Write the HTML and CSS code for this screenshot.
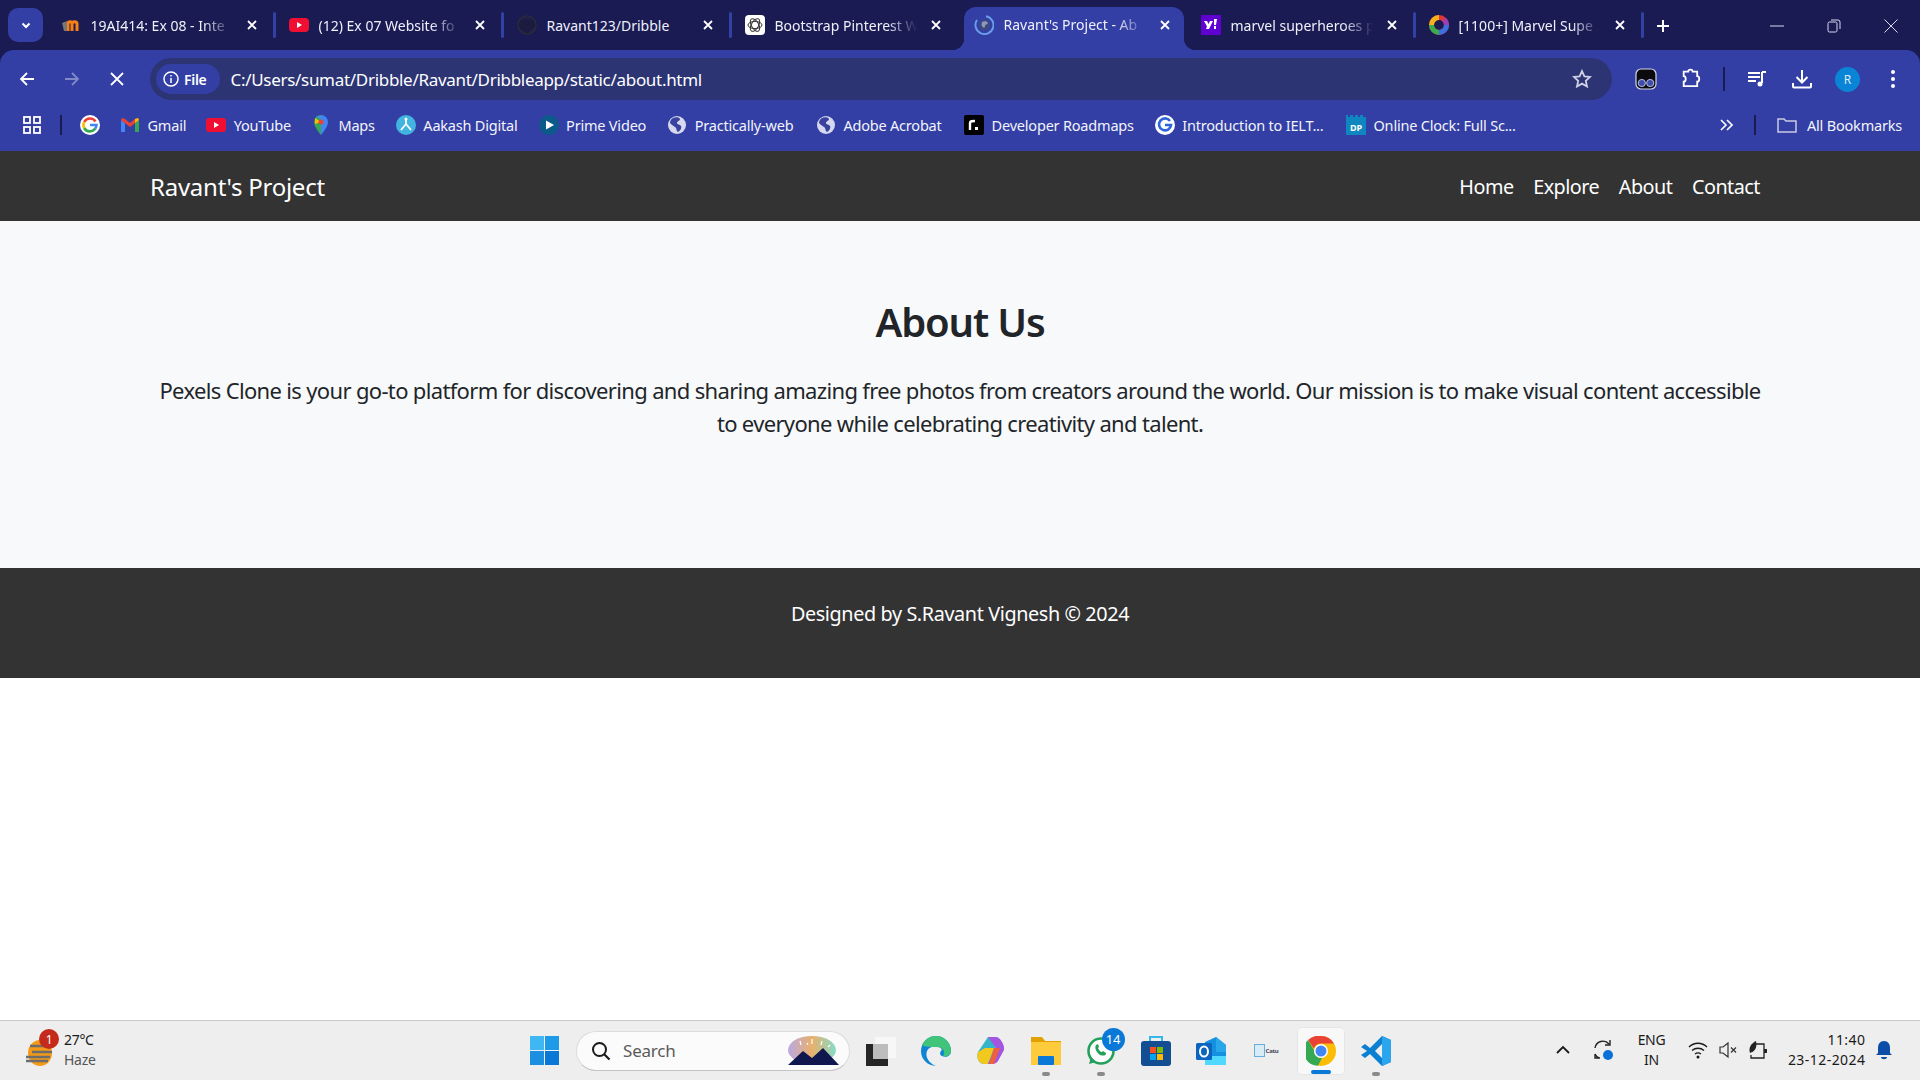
FILE: index.html
```html
<!DOCTYPE html>
<html lang="en">
<head>
<meta charset="utf-8">
<title>Ravant's Project - About</title>
<link rel="stylesheet" href="styles.css">
</head>
<body>
<svg class="defs" aria-hidden="true">
  <symbol id="x" viewBox="0 0 12 12"><path d="M2 2l8 8M10 2l-8 8" stroke="#fff" stroke-width="1.8" fill="none"/></symbol>
  <symbol id="globe" viewBox="0 0 20 20"><circle cx="10" cy="10" r="9" fill="#d5d8ee"/><path d="M6 3c3-1 6-1 7 1 0 2-3 2-3 4s3 1 4 3-1 5-3 6c-2-1-1-4-3-5S4 9 3 8c0-2 1-4 3-5z" fill="#39439f"/></symbol>
</svg>

<header class="browser">
  <div class="strip">
    <button class="tabsearch"><svg class="i12" viewBox="0 0 12 12"><path d="M2.5 4.5L6 8l3.5-3.5" stroke="#fff" stroke-width="2" fill="none"/></svg></button>
    <div class="tab">
      <svg class="fav" viewBox="0 0 20 20"><path d="M7 16V9c0-3 4-3 4 0v7M11 9c0-3 5-3 5 0v7" stroke="#f98012" stroke-width="3" fill="none"/><path d="M1 8l5-2v10H3z" fill="#777"/></svg>
      <span class="title fade">19AI414: Ex 08 - Inte</span><svg class="close"><use href="#x"/></svg><i class="sep"></i>
    </div>
    <div class="tab">
      <svg class="fav" viewBox="0 0 20 20"><rect y="3" width="20" height="14" rx="4" fill="#f00f33"/><path d="M8 7l5 3-5 3z" fill="#fff"/></svg>
      <span class="title fade">(12) Ex 07 Website fo</span><svg class="close"><use href="#x"/></svg><i class="sep"></i>
    </div>
    <div class="tab">
      <svg class="fav" viewBox="0 0 20 20"><circle cx="10" cy="10" r="9" fill="#20204f"/><path d="M7 18v-3c-3 0-5-2-5-5 0-2 1-3 1-3V4l3 1c2-.6 6-.6 8 0l3-1v3s1 1 1 3c0 3-2 5-5 5v3" fill="#1b1b40"/><circle cx="10" cy="10" r="9" fill="none" stroke="#2a2a38" stroke-width="1.5"/></svg>
      <span class="title">Ravant123/Dribble</span><svg class="close"><use href="#x"/></svg><i class="sep"></i>
    </div>
    <div class="tab">
      <svg class="fav" viewBox="0 0 20 20"><rect width="20" height="20" rx="4" fill="#fff"/><g fill="none" stroke="#333" stroke-width="1"><ellipse cx="10" cy="10" rx="7" ry="3.6"/><ellipse cx="10" cy="10" rx="7" ry="3.6" transform="rotate(60 10 10)"/><ellipse cx="10" cy="10" rx="7" ry="3.6" transform="rotate(120 10 10)"/></g></svg>
      <span class="title fade">Bootstrap Pinterest W</span><svg class="close"><use href="#x"/></svg>
    </div>
    <div class="tab active">
      <svg class="fav" viewBox="0 0 20 20"><circle cx="10.500" cy="10" r="5.500" fill="#3c4a80"/><path d="M8 7c2-1 5-1 6 1-1 2-3 1-3 3s-2 2-3 0 0-2 0-4z" fill="#8f98b8"/><path d="M12 1.200A9 9 0 1 1 3 5" fill="none" stroke="#6a9be8" stroke-width="2"/></svg>
      <span class="title fade">Ravant's Project - Ab</span><svg class="close"><use href="#x"/></svg>
    </div>
    <div class="tab">
      <svg class="fav" viewBox="0 0 20 20"><rect width="20" height="20" fill="#6001d2"/><path d="M3 6h3l1.500 3L9 6h3l-4 8H5l1-2.500zM13 4h3l-1 6h-2zM13 11h2v3h-2z" fill="#fff"/></svg>
      <span class="title fade">marvel superheroes p</span><svg class="close"><use href="#x"/></svg><i class="sep"></i>
    </div>
    <div class="tab">
      <svg class="fav" viewBox="0 0 20 20" fill="none" stroke-width="5"><circle cx="10" cy="10" r="7.500" stroke="#e0353a"/><path d="M10 2.500A7.500 7.500 0 0 0 2.500 10" stroke="#f6b21b"/><path d="M2.500 10A7.500 7.500 0 0 0 10 17.500" stroke="#3cab4a"/><path d="M10 17.500A7.500 7.500 0 0 0 17.500 10" stroke="#3d6fe0"/><path d="M17.500 10A7.500 7.500 0 0 0 15 4.500" stroke="#9c3fb5"/></svg>
      <span class="title fade">[1100+] Marvel Supe</span><svg class="close"><use href="#x"/></svg><i class="sep"></i>
    </div>
    <svg class="plus" viewBox="0 0 14 14"><path d="M7 1v12M1 7h12" stroke="#fff" stroke-width="2"/></svg>
    <div class="winctl">
      <svg class="i14" viewBox="0 0 14 14"><path d="M0 7h14" stroke="#d8daf0" stroke-width="1"/></svg>
      <svg class="i14" viewBox="0 0 14 14"><rect x="1" y="3" width="9" height="10" rx="1.500" fill="none" stroke="#d8daf0"/><path d="M4 1h7a2 2 0 0 1 2 2v7" fill="none" stroke="#d8daf0"/></svg>
      <svg class="i14" viewBox="0 0 14 14"><path d="M0.500 0.500l13 13M13.500 0.500l-13 13" stroke="#d8daf0"/></svg>
    </div>
  </div>

  <div class="toolbar">
    <div class="navbtns">
      <svg class="i18" viewBox="0 0 18 18"><path d="M16 9H3M9 3L3 9l6 6" stroke="#fff" stroke-width="1.800" fill="none"/></svg>
      <svg class="i18" viewBox="0 0 18 18"><path d="M2 9h13M9 3l6 6-6 6" stroke="#8188c6" stroke-width="1.800" fill="none"/></svg>
      <svg class="i18" viewBox="0 0 18 18"><path d="M3 3l12 12M15 3L3 15" stroke="#fff" stroke-width="1.800" fill="none"/></svg>
    </div>
    <div class="omni">
      <div class="chip">
        <svg class="i18" viewBox="0 0 18 18"><circle cx="9" cy="9" r="7" fill="none" stroke="#fff" stroke-width="1.500"/><path d="M9 8v5M9 5v1.600" stroke="#fff" stroke-width="1.500"/></svg>
        <span>File</span>
      </div>
      <span class="url">C:/Users/sumat/Dribble/Ravant/Dribbleapp/static/about.html</span>
      <svg class="star" viewBox="0 0 20 20"><path d="M10 2l2.400 5.300 5.600.600-4.200 3.900 1.200 5.700-5-2.900-5 2.900 1.200-5.700L2 7.900l5.600-.6z" fill="none" stroke="#cfd2e4" stroke-width="1.800"/></svg>
    </div>
    <div class="actions">
      <svg class="i22" viewBox="0 0 22 22"><rect x="1" y="1" width="20" height="20" rx="5" fill="#0b0b0f" stroke="#d6d8ea" stroke-width="1.200"/><circle cx="6.800" cy="15" r="3.600" fill="#3f4ea8" stroke="#b9bfe6"/><circle cx="15.200" cy="15" r="3.600" fill="#3f4ea8" stroke="#b9bfe6"/></svg>
      <svg class="i22 puzzle" viewBox="0 0 22 22"><path d="M3 3h5c0-3 5-3 5 0h5v5c3 0 3 6 0 6v5H3v-5c3 0 3-6 0-6z" transform="translate(1 1) scale(.9)" fill="none" stroke="#fff" stroke-width="2"/></svg>
      <i class="vsep"></i>
      <svg class="i22" viewBox="0 0 22 22"><path d="M2 5h12M2 9h12M2 13h8" stroke="#fff" stroke-width="2"/><path d="M16 4h4M16 4v11" stroke="#fff" stroke-width="2" fill="none"/><circle cx="14" cy="16" r="2.500" fill="#fff"/></svg>
      <svg class="i22 dl" viewBox="0 0 22 22"><path d="M11 2v12M5.500 9l5.500 5.500L16.500 9M2 15v3.500a1 1 0 0 0 1 1h16a1 1 0 0 0 1-1V15" stroke="#fff" stroke-width="2" fill="none"/></svg>
      <span class="avatar">R</span>
      <svg class="i22 dots" viewBox="0 0 22 22"><circle cx="11" cy="4" r="2" fill="#fff"/><circle cx="11" cy="11" r="2" fill="#fff"/><circle cx="11" cy="18" r="2" fill="#fff"/></svg>
    </div>
  </div>

  <nav class="bookmarks">
    <svg class="apps" viewBox="0 0 18 18"><g fill="none" stroke="#fff" stroke-width="1.800"><rect x="1" y="1" width="6" height="6"/><rect x="11" y="1" width="6" height="6"/><rect x="1" y="11" width="6" height="6"/><rect x="11" y="11" width="6" height="6"/></g></svg>
    <i class="bsep"></i>
    <svg class="bfav g0" viewBox="0 0 20 20"><circle cx="10" cy="10" r="10" fill="#fff"/><g fill="none" stroke-width="2.600"><path d="M15.500 6.500A6.500 6.500 0 0 0 4.200 7" stroke="#ea4335"/><path d="M4.200 7a6.500 6.500 0 0 0 0 6" stroke="#fbbc05"/><path d="M4.200 13a6.500 6.500 0 0 0 11 .6" stroke="#34a853"/><path d="M15.200 13.600A6.500 6.500 0 0 0 16.500 10H10" stroke="#4285f4"/></g></svg>
    <a class="bm"><svg class="bfav" viewBox="0 0 20 20"><path d="M1 5v12h4V8z" fill="#4285f4"/><path d="M19 5v12h-4V8z" fill="#34a853"/><path d="M1 5l9 7 9-7-1-2-3 1-5 4-5-4-3-1z" fill="#ea4335"/><path d="M15 4v4l4-3-1-2z" fill="#fbbc05"/></svg>Gmail</a>
    <a class="bm"><svg class="bfav" viewBox="0 0 20 20"><rect y="3" width="20" height="14" rx="3" fill="#f00f33"/><path d="M8 7l5 3-5 3z" fill="#fff"/></svg>YouTube</a>
    <a class="bm"><svg class="bfav" viewBox="0 0 20 20"><path d="M10 0a7 7 0 0 0-7 7c0 5 7 13 7 13z" fill="#34a853"/><path d="M10 0a7 7 0 0 1 7 7c0 5-7 13-7 13z" fill="#4285f4"/><path d="M4 3l6 4-6 2z" fill="#fbbc05"/><path d="M5 1l5 4 3-4z" fill="#4285f4"/><circle cx="10" cy="7" r="2.500" fill="#ea4335"/></svg>Maps</a>
    <a class="bm wide"><svg class="bfav" viewBox="0 0 20 20"><circle cx="10" cy="10" r="10" fill="#42b4e0"/><path d="M10 3v6M10 9l-5 6M10 9l5 6" stroke="#fff" stroke-width="1.800"/><circle cx="10" cy="4" r="1.500" fill="#fff"/></svg>Aakash Digital</a>
    <a class="bm wide"><svg class="bfav" viewBox="0 0 20 20"><circle cx="10" cy="10" r="10" fill="#0b5a8a"/><path d="M7 5.500l8 4.500-8 4.500z" fill="#fff"/></svg>Prime Video</a>
    <a class="bm wide"><svg class="bfav"><use href="#globe"/></svg>Practically-web</a>
    <a class="bm wider"><svg class="bfav"><use href="#globe"/></svg>Adobe Acrobat</a>
    <a class="bm wider"><svg class="bfav" viewBox="0 0 20 20"><rect width="20" height="20" rx="2" fill="#000"/><path d="M6 15V8c0-2 2-2 5-2" stroke="#fff" stroke-width="2.400" fill="none"/><rect x="11" y="12" width="3" height="3" fill="#fff"/></svg>Developer Roadmaps</a>
    <a class="bm wide"><svg class="bfav" viewBox="0 0 20 20"><circle cx="10" cy="10" r="10" fill="#fff"/><path d="M15 6a6 6 0 1 0 1 4h-6" fill="none" stroke="#2d66d8" stroke-width="2.600"/></svg>Introduction to IELT...</a>
    <a class="bm wider"><svg class="bfav" viewBox="0 0 20 20"><path d="M0 0h2v2h2V0h3v2h2V0h3v2h2V0h3v2h3v18H0z" fill="#0f86bf"/><text x="10" y="16" class="dp">DP</text></svg>Online Clock: Full Sc...</a>
    <span class="bspace"></span>
    <svg class="chev" viewBox="0 0 14 14"><path d="M2 2l5 5-5 5M8 2l5 5-5 5" fill="none" stroke="#fff" stroke-width="1.600"/></svg>
    <i class="bsep right"></i>
    <svg class="folder" viewBox="0 0 20 20"><path d="M1 4h6l2 2h10v11H1z" fill="none" stroke="#c9cce2" stroke-width="1.500"/></svg>
    <span class="allb">All Bookmarks</span>
  </nav>
</header>

<div class="site">
  <div class="sitenav">
    <a class="brand">Ravant's Project</a>
    <ul class="links"><li>Home</li><li>Explore</li><li>About</li><li>Contact</li></ul>
  </div>
  <main class="about">
    <h1>About Us</h1>
    <p>Pexels Clone is your go-to platform for discovering and sharing amazing free photos from creators around the world. Our mission is to make visual content accessible to everyone while celebrating creativity and talent.</p>
  </main>
  <footer class="foot">Designed by S.Ravant Vignesh © 2024</footer>
</div>

<div class="filler"></div>

<div class="taskbar">
  <div class="weather">
    <div class="wicon">
      <svg viewBox="0 0 28 26"><ellipse cx="15" cy="13" rx="12" ry="13" fill="#f59a16"/><path d="M5 6h22M7 12h20M1 17h24M1 21h22" stroke="#6d6d6d" stroke-width="2.400"/></svg>
      <span class="wbadge">1</span>
    </div>
    <div class="wtext"><span>27°C</span><span class="haze">Haze</span></div>
  </div>
  <div class="center">
    <svg class="start" viewBox="0 0 29 29"><rect width="14" height="14" fill="#3fb7f2"/><rect x="15" width="14" height="14" fill="#1e9be8"/><rect y="15" width="14" height="14" fill="#1c8fe0"/><rect x="15" y="15" width="14" height="14" fill="#0a78d6"/></svg>
    <div class="search">
      <svg class="i20" viewBox="0 0 20 20"><circle cx="8.500" cy="8.500" r="6.500" fill="none" stroke="#1a1a1a" stroke-width="2"/><path d="M13 13l5.500 5.500" stroke="#1a1a1a" stroke-width="2.200"/></svg>
      <span>Search</span>
      <svg class="scene" viewBox="0 0 53 30"><defs><linearGradient id="sky" x1="0" y1="0" x2="1" y2="0"><stop offset="0" stop-color="#b9a9e6"/><stop offset=".5" stop-color="#e9b06a"/><stop offset="1" stop-color="#86dcc8"/></linearGradient></defs><ellipse cx="26" cy="14" rx="24" ry="14" fill="url(#sky)"/><path d="M2 29L17 15l9 7 11-10 16 17z" fill="#10174f"/><path d="M14 5l1 4M26 3v5M36 5l-1 4M21 7l1 2M44 9l-2 2" stroke="#fff" stroke-width="1.200"/></svg>
    </div>
    <div class="apps-row">
      <span class="slot"><svg class="i30" viewBox="0 0 30 30"><rect x="9" y="1" width="21" height="21" fill="#f7f7f7"/><rect y="8" width="22" height="22" fill="#262626"/><rect x="7" y="8" width="15" height="15" fill="#bdbdbd"/></svg></span>
      <span class="slot"><svg class="i30" viewBox="0 0 30 30"><path d="M15 0a15 15 0 0 1 15 15c0 5-5 7-9 5-3-1-2-5 0-6-2-5-12-5-15 1-2 5 1 12 9 15A15 15 0 0 1 15 0z" fill="#0d84d4"/><path d="M1 9C4 3 9 0 15 0a15 15 0 0 1 15 15c0 4-4 6-8 5 3-4 0-9-7-9-6 0-11 0-14-2z" fill="#3fc47a"/></svg></span>
      <span class="slot"><svg class="i30" viewBox="0 0 30 30"><path d="M12 1h5l3 10-6 17H8C3 28 0 22 2 16z" fill="#35b5c8"/><path d="M9 12h9l-6 16H8C3 28 0 22 2 16z" fill="#f0c81e"/><path d="M12 1h8c4 0 9 8 8 13l-6 11c-2 3-5 3-8 3h-2l8-16z" fill="#a155e0"/><path d="M18 12h6l-6 16h-5z" fill="#f0603e"/></svg></span>
      <span class="slot dot"><svg class="i30" viewBox="0 0 30 30"><path d="M0 1h11l3 4h16v24H0z" fill="#e1a200"/><rect y="6" width="30" height="23" fill="#fecb3c"/><rect x="7" y="20" width="16" height="9" rx="1" fill="#0a78d6"/></svg></span>
      <span class="slot dot"><svg class="i30" viewBox="0 0 30 30"><circle cx="15" cy="15" r="12.500" fill="#fff" stroke="#23a05a" stroke-width="2.600"/><path d="M3 28l2-7 5 5z" fill="#23a05a"/><path d="M10 9c-2 3 1 8 4 10 3 1 6 1 6-2l-3-2-1 1c-2 0-3-2-4-4l1-1-1-3z" fill="#23a05a"/></svg><b class="count">14</b></span>
      <span class="slot"><svg class="i30" viewBox="0 0 30 30"><path d="M9 5V1h12v4" fill="none" stroke="#35b8ea" stroke-width="2"/><rect y="5" width="30" height="25" rx="3" fill="#124e91"/><rect x="9" y="11" width="6" height="6" fill="#f25022"/><rect x="16" y="11" width="6" height="6" fill="#7fba00"/><rect x="9" y="18" width="6" height="6" fill="#00a4ef"/><rect x="16" y="18" width="6" height="6" fill="#ffb900"/></svg></span>
      <span class="slot"><svg class="i30" viewBox="0 0 30 30"><path d="M9 6l11-5 10 8v15l-8 5H11z" fill="#1490df"/><path d="M20 1l10 8v7H20z" fill="#28a8ea"/><rect x="9" y="20" width="21" height="9" fill="#50d9ff"/><rect y="7" width="16" height="17" rx="1.500" fill="#0a64c0"/><ellipse cx="8" cy="15.500" rx="4" ry="5" fill="none" stroke="#fff" stroke-width="2"/></svg></span>
      <span class="slot"><span class="catu"><svg viewBox="0 0 12 14"><rect x=".5" y=".5" width="11" height="13" fill="#d8ecf8" stroke="#5aa9df"/></svg><em>Catu</em></span></span>
      <span class="slot live"><svg class="i30" viewBox="0 0 30 30"><circle cx="15" cy="15" r="15" fill="#fbbc05"/><path d="M15 0a15 15 0 0 1 13 7.500H15a7.500 7.500 0 0 0-7 5L2 4A15 15 0 0 1 15 0z" fill="#ea4335"/><path d="M2 4l6.500 11A7 7 0 0 0 16 22l-4 7.700A15 15 0 0 1 2 4z" fill="#34a853"/><circle cx="15" cy="15" r="7" fill="#fff"/><circle cx="15" cy="15" r="5.500" fill="#4285f4"/></svg></span>
      <span class="slot dot"><svg class="i30" viewBox="0 0 30 30"><path d="M21 0l9 4v22l-9 4-12-12-5 4-4-3 6-4-6-4 4-3 5 4z" fill="#0b7fd1"/><path d="M21 0l9 4v22l-9 4z" fill="#2aa5ee"/><path d="M21 8l-7 7 7 7z" fill="#eeeeee"/></svg></span>
    </div>
  </div>
  <div class="tray">
    <svg class="i14 chevup" viewBox="0 0 14 14"><path d="M1 10l6-6 6 6" fill="none" stroke="#1a1a1a" stroke-width="1.800"/></svg>
    <span class="sync"><svg class="i22" viewBox="0 0 22 22"><path d="M2 9a8 8 0 0 1 14-4M4 17" fill="none" stroke="#222" stroke-width="1.400"/><path d="M17 1v5h-5M2 15v4h5M2 15c1 2 2 3 4 4" fill="none" stroke="#222" stroke-width="1.400"/><circle cx="15" cy="16" r="5" fill="#0a6fd6"/></svg></span>
    <div class="lang"><span>ENG</span><span>IN</span></div>
    <svg class="i20 wifi" viewBox="0 0 20 20"><g fill="none" stroke="#1a1a1a" stroke-width="1.400"><path d="M1 7c5-5 13-5 18 0M4 10.500c3.500-3 8.500-3 12 0M7 14c2-1.500 4-1.500 6 0"/></g><circle cx="10" cy="17" r="1.500" fill="#1a1a1a"/></svg>
    <svg class="i20 vol" viewBox="0 0 20 20"><path d="M1 7h3l5-4v14l-5-4H1z" fill="none" stroke="#333" stroke-width="1.200"/><path d="M12 7.500l5 5M17 7.500l-5 5" stroke="#333" stroke-width="1.200"/></svg>
    <svg class="i20 batt" viewBox="0 0 20 20"><path d="M8 4h8v14H3v-3" fill="none" stroke="#222" stroke-width="1.300"/><path d="M16 9h3v4h-3" fill="#222"/><path d="M2 13C0 7 4 3 8 1c1 5 0 9-4 11z" fill="#222"/></svg>
    <div class="clock"><span>11:40</span><span>23-12-2024</span></div>
    <svg class="i20 bell" viewBox="0 0 20 20"><path d="M10 1c4 0 6 3 6 7v5l2 2H2l2-2V8c0-4 2-7 6-7z" fill="#0c4da8"/><path d="M7 17h6c0 3-6 3-6 0z" fill="#0c4da8"/></svg>
  </div>
</div>
</body>
</html>
```

FILE: styles.css
```css
* { box-sizing: border-box; }
html, body { margin: 0; padding: 0; }
body {
  width: 1920px;
  height: 1080px;
  overflow: hidden;
  display: flex;
  flex-direction: column;
  background: #fff;
  font-family: "Noto Sans", "Open Sans", sans-serif;
  color: #212529;
}
.defs { position: absolute; width: 0; height: 0; }
svg { display: block; flex: none; }
.i12 { width: 12px; height: 12px; }
.i14 { width: 14px; height: 14px; }
.i18 { width: 18px; height: 18px; }
.i20 { width: 20px; height: 20px; }
.i22 { width: 22px; height: 22px; }
.i30 { width: 30px; height: 30px; }

/* browser frame */
.browser { flex: none; background: #1b1b54; }
.strip {
  height: 50px;
  padding: 8px 0 0 8px;
  display: flex;
  align-items: flex-start;
}
.tabsearch {
  width: 35px;
  height: 34px;
  margin-right: 4.5px;
  padding: 0;
  border: 0;
  border-radius: 10px;
  background: #333fa5;
  display: flex;
  align-items: center;
  justify-content: center;
}
.tab {
  width: 228px;
  height: 42px;
  padding: 0 0 8px 13px;
  display: flex;
  align-items: center;
  color: #eef0fa;
  font-size: 14px;
  letter-spacing: 0;
  position: relative;
}
.tab.active {
  width: 220px;
  margin: -1px 4px 0;
  height: 43px;
  padding-left: 10px;
  background: #333fa5;
  border-radius: 12px 12px 0 0;
}
.tab.active::before,
.tab.active::after {
  content: "";
  position: absolute;
  bottom: 0;
  width: 12px;
  height: 12px;
}
.tab.active::before { left: -12px; background: radial-gradient(circle at 0 0, transparent 12px, #333fa5 12.5px); }
.tab.active::after { right: -12px; background: radial-gradient(circle at 100% 0, transparent 12px, #333fa5 12.5px); }
.fav { width: 20px; height: 20px; margin-right: 10px; }
.title { width: 148px; white-space: nowrap; overflow: hidden; }
.title.fade { -webkit-mask-image: linear-gradient(to right, #000 calc(100% - 36px), transparent calc(100% - 6px)); mask-image: linear-gradient(to right, #000 calc(100% - 36px), transparent calc(100% - 6px)); }
.close { width: 12px; height: 12px; margin-left: 7px; }
.sep { width: 3px; height: 26px; margin-left: auto; background: #3340a5; border-radius: 2px; }
.plus { width: 14px; height: 14px; margin: 11px 0 0 12.5px; }
.winctl {
  margin-left: auto;
  padding: 11px 22px 0 0;
  display: flex;
  gap: 43px;
}

.toolbar {
  height: 50px;
  background: #333fa5;
  border-radius: 14px 14px 0 0;
  padding: 8px 0 0;
  display: flex;
  align-items: flex-start;
}
.navbtns {
  width: 150px;
  height: 42px;
  padding-left: 18px;
  display: flex;
  align-items: center;
  gap: 27px;
}
.omni {
  width: 1462px;
  height: 42px;
  padding: 0 20px 0 6px;
  background: #2d3474;
  border-radius: 21px;
  display: flex;
  align-items: center;
}
.chip {
  width: 64px;
  height: 30px;
  padding-left: 6px;
  background: #333fa5;
  border-radius: 15px;
  display: flex;
  align-items: center;
  gap: 4px;
  color: #fff;
  font-size: 14px;
  font-weight: 600;
  letter-spacing: -0.3px;
}
.url {
  margin-left: 10.5px;
  font-size: 17px;
  letter-spacing: -0.3px;
  color: #fff;
  white-space: nowrap;
}
.star { width: 20px; height: 20px; margin-left: auto; }
.actions {
  flex: 1;
  height: 42px;
  padding-left: 23px;
  display: flex;
  align-items: center;
}
.puzzle { margin-left: 23px; }
.vsep { width: 2px; height: 24px; margin: 0 21px; background: #1b1b54; }
.dl { margin-left: 23px; }
.avatar {
  width: 25px;
  height: 25px;
  margin-left: 22px;
  border-radius: 50%;
  background: #0a84d6;
  color: #dfeaf5;
  font-size: 12px;
  display: flex;
  align-items: center;
  justify-content: center;
}
.dots { margin-left: 22px; }

.bookmarks {
  height: 51px;
  padding: 0 0 1px 23px;
  background: #333fa5;
  display: flex;
  align-items: center;
  color: #f2f3fb;
  font-size: 14.500px;
  letter-spacing: -0.2px;
}
.apps { width: 18px; height: 18px; }
.bsep { width: 2px; height: 20px; margin-left: 19px; background: #1b1b54; }
.bsep.right { margin-left: 21px; }
.bfav { width: 20px; height: 20px; margin-right: 7.500px; }
.g0 { margin: 0 0 0 18px; }
.bm { display: flex; align-items: center; white-space: nowrap; margin-left: 20px; }
.bm.wide { margin-left: 21px; }
.bm.wider { margin-left: 22.500px; }
.dp { font: 700 9px "Noto Sans", sans-serif; fill: #fff; text-anchor: middle; }
.bspace { flex: 1; }
.chev { width: 14px; height: 14px; }
.folder { width: 20px; height: 20px; margin: 0 10px 0 21px; }
.allb { padding-right: 18px; white-space: nowrap; }

/* the site */
.site { flex: none; }
.sitenav {
  height: 70px;
  padding: 0 160px 0 150px;
  background: #333;
  display: flex;
  align-items: center;
  justify-content: space-between;
  color: #fff;
}
.brand { font-size: 24px; letter-spacing: -0.25px; }
.links {
  list-style: none;
  margin: 0;
  padding: 0;
  display: flex;
  gap: 19.500px;
  font-size: 19.800px;
  letter-spacing: -0.5px;
}
.about {
  height: 347px;
  padding: 75px 150px 0;
  background: #f8f9fa;
  text-align: center;
}
.about h1 {
  margin: 0 0 26px;
  font-size: 40px;
  line-height: 52px;
  font-weight: 600;
  letter-spacing: -1.15px;
}
.about p {
  margin: 0;
  font-size: 22px;
  line-height: 33px;
  letter-spacing: -0.66px;
}
.foot {
  height: 110px;
  padding-bottom: 20px;
  background: #333;
  color: #fff;
  font-size: 19.800px;
  letter-spacing: -0.38px;
  display: flex;
  align-items: center;
  justify-content: center;
}
.filler { flex: 1; }

/* taskbar */
.taskbar {
  height: 60px;
  flex: none;
  background: #eee;
  border-top: 1px solid #c8c8c8;
  display: flex;
  align-items: center;
  color: #1a1a1a;
  font-size: 14px;
  letter-spacing: -0.3px;
  position: relative;
}
.weather { width: 530px; padding-left: 25px; display: flex; align-items: center; gap: 11px; margin-top: -1px; }
.wicon { width: 28px; height: 26px; margin-top: 6px; position: relative; }
.wicon svg { width: 28px; height: 26px; }
.wbadge {
  position: absolute;
  top: -11px;
  left: 14px;
  width: 20px;
  height: 20px;
  border-radius: 50%;
  background: #c42b1c;
  color: #fff;
  font-size: 12px;
  display: flex;
  align-items: center;
  justify-content: center;
}
.wtext { display: flex; flex-direction: column; line-height: 20px; }
.haze { color: #555; }
.center { display: flex; align-items: center; }
.start { width: 29px; height: 29px; }
.search {
  width: 274px;
  height: 40px;
  margin: 0 0 0 17px;
  padding: 0 10px 0 14px;
  border-radius: 20px;
  background: #fbfbfb;
  border: 1px solid #dcdcdc;
  border-bottom-color: #c4c4c4;
  display: flex;
  align-items: center;
  color: #5a5a5a;
  font-size: 17px;
  letter-spacing: -0.2px;
}
.search span { margin-left: 12px; }
.scene { width: 53px; height: 30px; margin-left: auto; }
.apps-row { display: flex; margin-left: -10px; padding-left: 13.500px; }
.slot {
  width: 55px;
  height: 48px;
  display: flex;
  align-items: center;
  justify-content: center;
  position: relative;
}
.slot.dot::after, .slot.live::after {
  content: "";
  position: absolute;
  bottom: -1px;
  left: 50%;
  width: 8px;
  height: 4px;
  margin-left: -4px;
  border-radius: 2px;
  background: #8a8a8a;
}
.slot.live { background: #f8f8f8; border-radius: 5px; box-shadow: inset 0 0 0 1px #e6e6e6; width: 48px; margin: 0 3.500px; }
.slot.live::after { width: 20px; margin-left: -10px; background: #0a78d6; bottom: 1px; }
.count {
  position: absolute;
  top: 1px;
  left: 28px;
  width: 23px;
  height: 23px;
  border-radius: 50%;
  background: #0a78d6;
  color: #fff;
  font-size: 13px;
  font-weight: 400;
  display: flex;
  align-items: center;
  justify-content: center;
}
.catu { display: flex; align-items: center; gap: 1px; }
.catu svg { width: 11px; height: 13px; }
.catu em { font: 700 6px "Noto Sans", sans-serif; color: #445; }
.tray { margin-left: 152px; display: flex; align-items: center; flex: 1; margin-top: -1px; }
.sync { margin-left: 23px; }
.lang {
  width: 40px;
  margin-left: 17px;
  display: flex;
  flex-direction: column;
  align-items: center;
  line-height: 20px;
}
.wifi { margin-left: 16px; }
.vol { margin-left: 11px; }
.batt { margin-left: 9px; }
.clock {
  width: 88px;
  margin-left: 10px;
  display: flex;
  flex-direction: column;
  align-items: flex-end;
  line-height: 20px;
  white-space: nowrap;
  letter-spacing: 0.45px;
}
.bell { margin-left: 8px; }
```
